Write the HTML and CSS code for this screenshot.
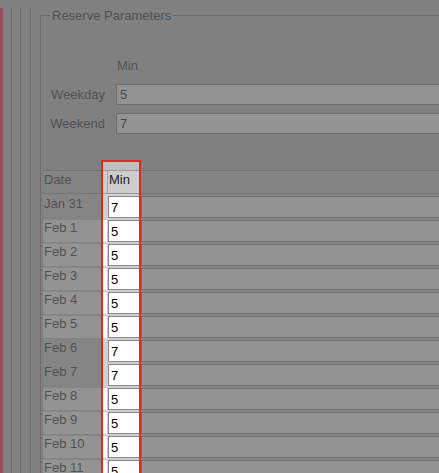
FILE: index.html
```html
<!DOCTYPE html>
<html lang="en">
<head>
<meta charset="utf-8">
<title>Reserve Parameters</title>
<link rel="stylesheet" href="styles.css">
</head>
<body>
<div class="shell">
  <div class="rail">
    <div class="rail rail-2">
      <div class="rail rail-3">
        <fieldset class="params">
          <legend>Reserve Parameters</legend>
          <div class="defaults">
            <span></span><span class="col-head">Min</span>
            <label for="wd">Weekday</label><input id="wd" value="5">
            <label for="we">Weekend</label><input id="we" value="7">
          </div>
          <div class="schedule">
            <div class="tour-focus"></div>
            <div class="row head"><div class="cell date">Date</div><div class="cell min">Min</div><div class="cell rest"></div></div>
            <div class="row weekend"><div class="cell date">Jan 31</div><div class="cell min"><input value="7"></div><div class="cell rest"><input></div></div>
            <div class="row"><div class="cell date">Feb 1</div><div class="cell min"><input value="5"></div><div class="cell rest"><input></div></div>
            <div class="row"><div class="cell date">Feb 2</div><div class="cell min"><input value="5"></div><div class="cell rest"><input></div></div>
            <div class="row"><div class="cell date">Feb 3</div><div class="cell min"><input value="5"></div><div class="cell rest"><input></div></div>
            <div class="row"><div class="cell date">Feb 4</div><div class="cell min"><input value="5"></div><div class="cell rest"><input></div></div>
            <div class="row"><div class="cell date">Feb 5</div><div class="cell min"><input value="5"></div><div class="cell rest"><input></div></div>
            <div class="row weekend"><div class="cell date">Feb 6</div><div class="cell min"><input value="7"></div><div class="cell rest"><input></div></div>
            <div class="row weekend"><div class="cell date">Feb 7</div><div class="cell min"><input value="7"></div><div class="cell rest"><input></div></div>
            <div class="row"><div class="cell date">Feb 8</div><div class="cell min"><input value="5"></div><div class="cell rest"><input></div></div>
            <div class="row"><div class="cell date">Feb 9</div><div class="cell min"><input value="5"></div><div class="cell rest"><input></div></div>
            <div class="row"><div class="cell date">Feb 10</div><div class="cell min"><input value="5"></div><div class="cell rest"><input></div></div>
            <div class="row"><div class="cell date">Feb 11</div><div class="cell min"><input value="5"></div><div class="cell rest"><input></div></div>
            <div class="row"><div class="cell date">Feb 12</div><div class="cell min"><input value="5"></div><div class="cell rest"><input></div></div>
          </div>
        </fieldset>
      </div>
    </div>
  </div>
</div>
</body>
</html>
```

FILE: styles.css
```css
html, body {
  margin: 0;
  height: 100%;
}
body {
  background: #c0c0c0;
  font: 13px/15px "Liberation Sans", Arial, sans-serif;
  color: #222;
  overflow: hidden;
}
.shell {
  border-left: 3px solid #ff1c48;
  padding-left: 8px;
  width: 900px;
  min-height: 100%;
  box-sizing: border-box;
}
.rail {
  border-left: 1px solid #7c7c7c;
  padding-left: 8px;
  min-height: 473px;
}
.rail-2, .rail-3 {
  padding-left: 9px;
}
.params {
  margin: 8px 0 0;
  padding: 0 0 0 2px;
  border: 1px solid #7c7c7c;
  width: 760px;
  min-width: 0;
  min-height: 500px;
}
.params legend {
  margin-left: 7px;
  padding: 0 2px;
  line-height: 15px;
}
.defaults {
  display: grid;
  grid-template-columns: 62px 500px;
  column-gap: 11px;
  row-gap: 8px;
  align-items: center;
  margin-top: 35px;
}
.defaults label {
  text-align: right;
}
.col-head {
  padding: 0 0 3px 1px;
}
.defaults input {
  height: 21px;
  box-sizing: border-box;
  border: 1px solid #808080;
  border-radius: 2px;
  padding: 0 0 0 3px;
  font: inherit;
  color: #000;
  background: #fff;
  margin: 0;
}
.schedule {
  position: relative;
  margin-top: 36px;
}
.row {
  display: grid;
  grid-template-columns: 64px 34px 1fr;
  height: 24px;
  box-sizing: border-box;
  padding-top: 2px;
  background: #d0d0d0;
}
.row.head {
  padding-top: 0;
  border-top: 1px solid #999;
  border-bottom: 1px solid #999;
  background: #cdcdcd;
}
.head .cell {
  padding: 1px 0 0 1px;
}
.head .min {
  border-left: 1px solid #a8a8a8;
}
.date {
  padding-left: 1px;
  background: #fff;
}
.head .date,
.weekend .date {
  background: transparent;
}
.min {
  padding-left: 1px;
}
.row input {
  display: block;
  width: 100%;
  height: 22px;
  box-sizing: border-box;
  margin: 0;
  border: 1px solid #8a8a8a;
  padding: 0 0 0 2px;
  font: inherit;
  color: #000;
  background: #fff;
}
.tour-focus {
  position: absolute;
  left: 58px;
  top: -10px;
  width: 40px;
  height: 330px;
  box-sizing: border-box;
  border: 2px solid #dd2a1b;
  box-shadow: 0 0 0 3000px rgba(101, 101, 101, 0.7);
  z-index: 10;
  pointer-events: none;
}
```
